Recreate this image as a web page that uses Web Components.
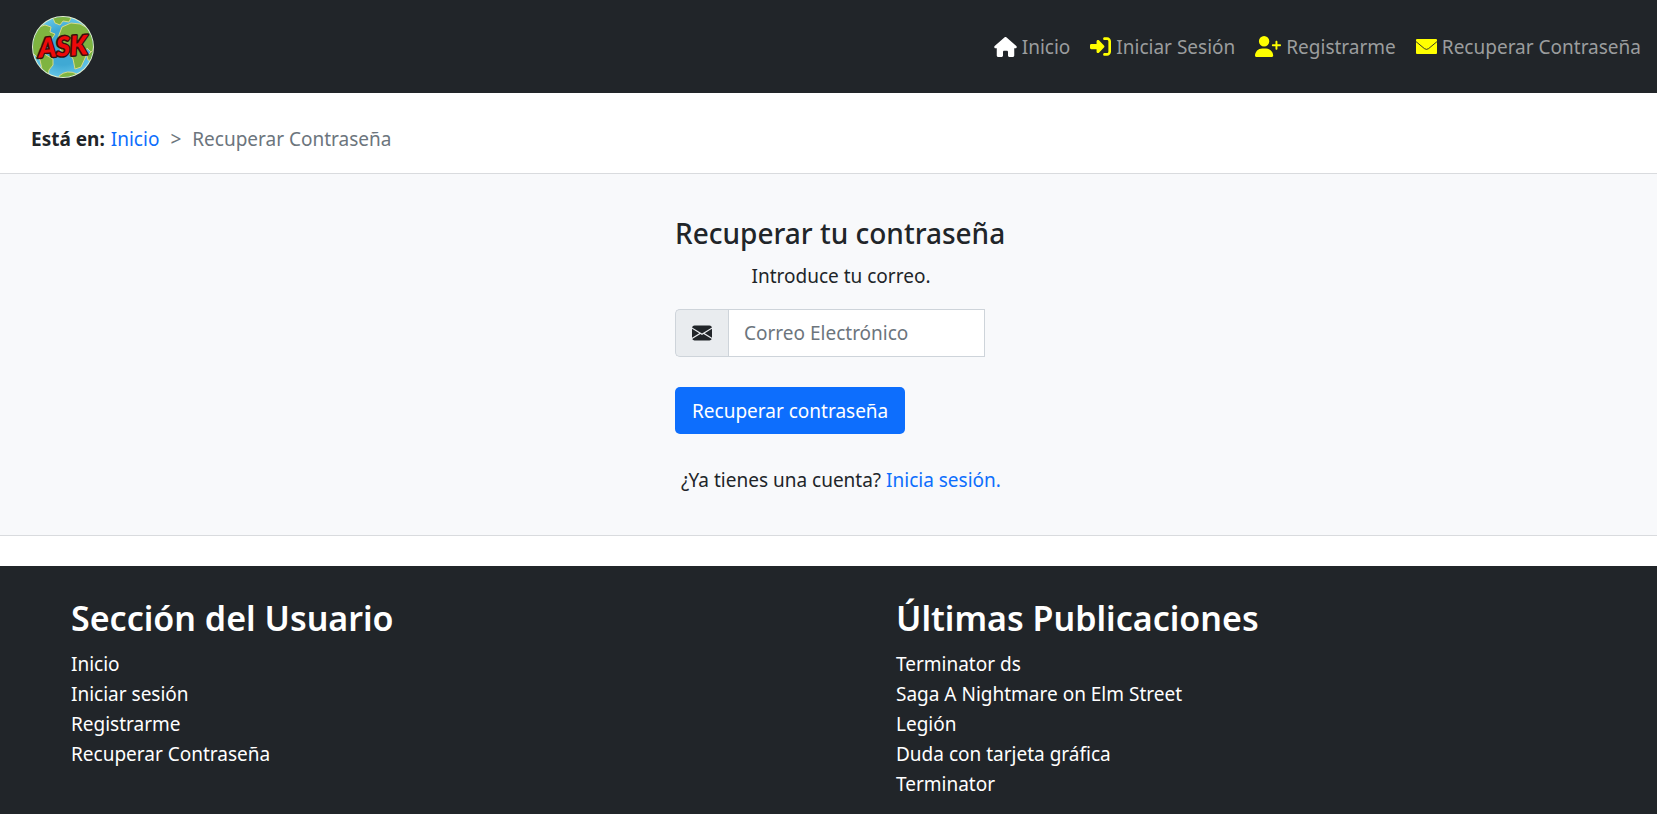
<!DOCTYPE html>
<html lang="es">
<head>
<meta charset="utf-8">
<meta name="viewport" content="width=device-width, initial-scale=1">
<title>Recuperar Contraseña</title>
<style>
  body {
    margin: 0;
    background: #fff;
    color: #212529;
    font: 400 19px/30px "Noto Sans", "Open Sans", sans-serif;
  }
</style>
</head>
<body>
<ask-navbar>
  <ask-logo slot="brand"></ask-logo>
  <ask-nav-link icon="house" style="--icon: #fff">Inicio</ask-nav-link>
  <ask-nav-link icon="login">Iniciar Sesión</ask-nav-link>
  <ask-nav-link icon="user">Registrarme</ask-nav-link>
  <ask-nav-link icon="mail">Recuperar Contraseña</ask-nav-link>
</ask-navbar>
<ask-breadcrumb current="Recuperar Contraseña"></ask-breadcrumb>
<ask-recover-form></ask-recover-form>
<ask-footer>
  <ask-link-list heading="Sección del Usuario" items="Inicio|Iniciar sesión|Registrarme|Recuperar Contraseña"></ask-link-list>
  <ask-link-list heading="Últimas Publicaciones" items="Terminator ds|Saga A Nightmare on Elm Street|Legión|Duda con tarjeta gráfica|Terminator"></ask-link-list>
</ask-footer>
<script>
  const define = (name, render) => customElements.define(name, class extends HTMLElement {
    connectedCallback() {
      if (this.shadowRoot) return;
      this.attachShadow({ mode: "open" }).innerHTML = render(this);
    }
  });

  const icons = {
    house: '<svg width="23" height="20" viewBox="0 0 576 512"><path d="M575.8 255.5c0 18-15 32.1-32 32.1h-32l.7 160.2c0 2.7-.2 5.4-.5 8.1V472c0 22.1-17.9 40-40 40H456c-1.1 0-2.2 0-3.3-.1c-1.4 .1-2.8 .1-4.2 .1H416 392c-22.1 0-40-17.9-40-40V448 384c0-17.7-14.3-32-32-32H256c-17.7 0-32 14.3-32 32v64 24c0 22.1-17.9 40-40 40H160 128.1c-1.5 0-3-.1-4.5-.2c-1.2 .1-2.4 .2-3.6 .2H104c-22.1 0-40-17.9-40-40V360c0-.9 0-1.9 .1-2.8V287.6H32c-18 0-32-14-32-32.1c0-9 3-17 10-24L266.4 8c7-7 15-8 22-8s15 2 21 7L564.8 231.5c8 7 12 15 11 24z"/></svg>',
    login: '<svg width="21" height="21" viewBox="0 0 512 512"><path d="M217.9 105.9L340.7 228.7c7.2 7.2 11.3 17.1 11.3 27.3s-4.1 20.1-11.3 27.3L217.9 406.1c-6.4 6.4-15 9.9-24 9.9c-18.7 0-33.9-15.2-33.9-33.9l0-62.1L32 320c-17.7 0-32-14.3-32-32l0-64c0-17.7 14.3-32 32-32l128 0 0-62.1c0-18.7 15.2-33.9 33.9-33.9c9 0 17.6 3.6 24 9.9zM352 416l64 0c17.7 0 32-14.3 32-32l0-256c0-17.7-14.3-32-32-32l-64 0c-17.7 0-32-14.3-32-32s14.3-32 32-32l64 0c53 0 96 43 96 96l0 256c0 53-43 96-96 96l-64 0c-17.7 0-32-14.3-32-32s14.3-32 32-32z"/></svg>',
    user: '<svg width="26" height="21" viewBox="0 0 640 512"><path d="M96 128a128 128 0 1 1 256 0A128 128 0 1 1 96 128zM0 482.3C0 383.8 79.8 304 178.3 304h91.4C368.2 304 448 383.8 448 482.3c0 16.4-13.3 29.7-29.7 29.7H29.7C13.3 512 0 498.7 0 482.3zM504 312V248H440c-13.3 0-24-10.7-24-24s10.7-24 24-24h64V136c0-13.3 10.7-24 24-24s24 10.7 24 24v64h64c13.3 0 24 10.7 24 24s-10.7 24-24 24H552v64c0 13.3-10.7 24-24 24s-24-10.7-24-24z"/></svg>',
    mail: '<svg width="21" height="15" viewBox="0 0 21 15"><rect width="21" height="15" rx="1"/><path d="M0 2.6L8.4 9.6Q10.5 11.2 12.6 9.6L21 2.6" fill="none" stroke="#212529" stroke-width=".9"/></svg>'
  };

  define("ask-navbar", () => `
    <style>
      :host { display: block; background: #212529; }
      header { display: flex; align-items: center; justify-content: space-between; padding: 0 16px 0 31px; min-height: 93px; box-sizing: border-box; }
      nav { display: flex; flex-wrap: wrap; gap: 20px; }
    </style>
    <header><slot name="brand"></slot><nav aria-label="Principal"><slot></slot></nav></header>`);

  define("ask-logo", () => `
    <style>:host { display: block; } a, svg { display: block; } text { font: italic 900 27px "Lato", sans-serif; }</style>
    <a href="#" aria-label="ASK"><svg width="64" height="64" viewBox="0 0 64 64">
      <defs><clipPath id="globe"><circle cx="32" cy="32" r="30"/></clipPath>
      <radialGradient id="sea" cx=".5" cy=".5" r=".5"><stop offset=".6" stop-color="#3fa9d4"/><stop offset="1" stop-color="#62c4e6"/></radialGradient></defs>
      <circle cx="32" cy="32" r="31" fill="#e4efcf"/><circle cx="32" cy="32" r="30" fill="url(#sea)"/>
      <g clip-path="url(#globe)" fill="#7fb440" stroke="#d5d98a" stroke-width="1">
        <path d="M1 26Q3 12 14 10L20 12 19 17 24 19 20 25 13 27 9 33 15 40 22 44 22 50 18 55 17 62 11 54 9 45 2 38Z"/>
        <path d="M22 3L30 0 40 3 38 7 32 6 29 10 24 8Z"/>
        <path d="M28 20L31 12 40 8 49 9 58 14 64 26 61 38 56 33 55 41 50 52 44 54 42 44 38 38 30 36 27 29Z"/>
        <path d="M56 41L63 34 62 46 57 45Z"/>
        <path d="M28 61Q36 54 46 59L42 64 30 64Z"/>
      </g>
      <g transform="rotate(-4 32 32)"><text x="32" y="41" text-anchor="middle" fill="#ed0909" stroke="#38100c" stroke-width="3" paint-order="stroke" stroke-linejoin="round">ASK</text></g>
    </svg></a>`);

  define("ask-nav-link", (el) => `
    <style>
      :host { display: block; }
      a { display: flex; align-items: center; gap: 5px; color: #9b9d9e; text-decoration: none; white-space: nowrap; }
      svg { fill: var(--icon, #ff0); flex: none; }
    </style>
    <a href="#">${icons[el.getAttribute("icon")]}<span><slot></slot></span></a>`);

  define("ask-breadcrumb", (el) => `
    <style>
      :host { display: block; padding: 31px 31px 19px; }
      nav { display: flex; flex-wrap: wrap; }
      strong { font-weight: 700; margin-right: 6px; }
      a { color: #0d6efd; text-decoration: none; }
      .sep, .here { color: #6c757d; }
      .sep { margin: 0 11px; }
    </style>
    <nav aria-label="Migas de pan"><strong>Está en:</strong><a href="#">Inicio</a><span class="sep" aria-hidden="true">&gt;</span><span class="here" aria-current="page">${el.getAttribute("current")}</span></nav>`);

  define("ask-recover-form", () => `
    <style>
      :host { display: block; background: #f8f9fb; border: solid #d9dbde; border-width: 1px 0; padding: 41px 0 40px 25px; margin-bottom: 30px; }
      form { width: 332px; margin: 0 auto; }
      h1 { margin: 0 0 10px; font-size: 28px; font-weight: 500; line-height: 36px; white-space: nowrap; }
      p { margin: 0; text-align: center; }
      .group { display: flex; width: 310px; height: 48px; box-sizing: border-box; margin: 18px 0 30px; }
      label { display: flex; align-items: center; padding: 0 16px; border: 1px solid #ced4da; border-right: 0; border-radius: 5px 0 0 5px; background: #e9ecef; }
      svg { fill: #212529; }
      input { flex: 1; min-width: 0; border: 1px solid #ced4da; border-radius: 0; padding: 0 15px; font: inherit; color: inherit; background: #fff; }
      input::placeholder { color: #6c757d; opacity: 1; }
      button { display: block; height: 47px; border: 0; border-radius: 5px; padding: 0 17px; background: #0d6efd; color: #fff; font: inherit; margin-bottom: 31px; }
      a { color: #0d6efd; text-decoration: none; }
    </style>
    <form>
      <h1>Recuperar tu contraseña</h1>
      <p>Introduce tu correo.</p>
      <div class="group">
        <label for="email" aria-label="Correo Electrónico"><svg width="20" height="20" viewBox="0 0 16 16"><path d="M.05 3.555A2 2 0 0 1 2 2h12a2 2 0 0 1 1.95 1.555L8 8.414.05 3.555ZM0 4.697v7.104l5.803-3.558L0 4.697ZM6.761 8.83l-6.57 4.027A2 2 0 0 0 2 14h12a2 2 0 0 0 1.808-1.144l-6.57-4.027L8 9.586l-1.239-.757Zm3.436-.586L16 11.801V4.697l-5.803 3.546Z"/></svg></label>
        <input id="email" type="email" placeholder="Correo Electrónico">
      </div>
      <button type="button">Recuperar contraseña</button>
      <p>¿Ya tienes una cuenta? <a href="#">Inicia sesión.</a></p>
    </form>`);

  define("ask-footer", () => `
    <style>
      :host { display: block; background: #212529; color: #fff; }
      footer { display: grid; grid-template-columns: 1fr 1fr; column-gap: 64px; padding: 31px 0 15px 71px; }
    </style>
    <footer><slot></slot></footer>`);

  define("ask-link-list", (el) => `
    <style>
      :host { display: block; }
      h2 { margin: 0 0 10px; font-size: 34px; font-weight: 600; line-height: 42px; }
      ul { list-style: none; margin: 0; padding: 0; }
      a { color: inherit; text-decoration: none; }
    </style>
    <h2>${el.getAttribute("heading")}</h2>
    <ul>${el.getAttribute("items").split("|").map((t) => `<li><a href="#">${t}</a></li>`).join("")}</ul>`);
</script>
</body>
</html>
